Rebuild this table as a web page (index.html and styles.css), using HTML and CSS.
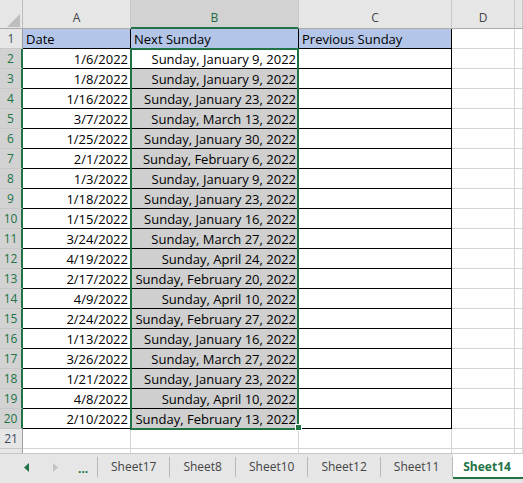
FILE: index.html
```html
<!DOCTYPE html>
<html>
<head>
<meta charset="utf-8">
<link rel="stylesheet" href="styles.css">
</head>
<body>
<div class="sheet">
  <div class="corner"><svg width="22" height="28" viewBox="0 0 22 28"><polygon points="20,14 20,27 7,27" fill="#bdbdbd"/></svg></div>
  <div class="ch">A</div><div class="ch on">B</div><div class="ch">C</div><div class="ch">D</div><div class="ch"></div>

  <div class="rh">1</div><div class="c d hdr">Date</div><div class="c d hdr">Next Sunday</div><div class="c d hdr">Previous Sunday</div><div class="c"></div><div class="c"></div>
  <div class="rh on">2</div><div class="c d num">1/6/2022</div><div class="c d num">Sunday, January 9, 2022</div><div class="c d"></div><div class="c"></div><div class="c"></div>
  <div class="rh on">3</div><div class="c d num">1/8/2022</div><div class="c d num fill">Sunday, January 9, 2022</div><div class="c d"></div><div class="c"></div><div class="c"></div>
  <div class="rh on">4</div><div class="c d num">1/16/2022</div><div class="c d num fill">Sunday, January 23, 2022</div><div class="c d"></div><div class="c"></div><div class="c"></div>
  <div class="rh on">5</div><div class="c d num">3/7/2022</div><div class="c d num fill">Sunday, March 13, 2022</div><div class="c d"></div><div class="c"></div><div class="c"></div>
  <div class="rh on">6</div><div class="c d num">1/25/2022</div><div class="c d num fill">Sunday, January 30, 2022</div><div class="c d"></div><div class="c"></div><div class="c"></div>
  <div class="rh on">7</div><div class="c d num">2/1/2022</div><div class="c d num fill">Sunday, February 6, 2022</div><div class="c d"></div><div class="c"></div><div class="c"></div>
  <div class="rh on">8</div><div class="c d num">1/3/2022</div><div class="c d num fill">Sunday, January 9, 2022</div><div class="c d"></div><div class="c"></div><div class="c"></div>
  <div class="rh on">9</div><div class="c d num">1/18/2022</div><div class="c d num fill">Sunday, January 23, 2022</div><div class="c d"></div><div class="c"></div><div class="c"></div>
  <div class="rh on">10</div><div class="c d num">1/15/2022</div><div class="c d num fill">Sunday, January 16, 2022</div><div class="c d"></div><div class="c"></div><div class="c"></div>
  <div class="rh on">11</div><div class="c d num">3/24/2022</div><div class="c d num fill">Sunday, March 27, 2022</div><div class="c d"></div><div class="c"></div><div class="c"></div>
  <div class="rh on">12</div><div class="c d num">4/19/2022</div><div class="c d num fill">Sunday, April 24, 2022</div><div class="c d"></div><div class="c"></div><div class="c"></div>
  <div class="rh on">13</div><div class="c d num">2/17/2022</div><div class="c d num fill">Sunday, February 20, 2022</div><div class="c d"></div><div class="c"></div><div class="c"></div>
  <div class="rh on">14</div><div class="c d num">4/9/2022</div><div class="c d num fill">Sunday, April 10, 2022</div><div class="c d"></div><div class="c"></div><div class="c"></div>
  <div class="rh on">15</div><div class="c d num">2/24/2022</div><div class="c d num fill">Sunday, February 27, 2022</div><div class="c d"></div><div class="c"></div><div class="c"></div>
  <div class="rh on">16</div><div class="c d num">1/13/2022</div><div class="c d num fill">Sunday, January 16, 2022</div><div class="c d"></div><div class="c"></div><div class="c"></div>
  <div class="rh on">17</div><div class="c d num">3/26/2022</div><div class="c d num fill">Sunday, March 27, 2022</div><div class="c d"></div><div class="c"></div><div class="c"></div>
  <div class="rh on">18</div><div class="c d num">1/21/2022</div><div class="c d num fill">Sunday, January 23, 2022</div><div class="c d"></div><div class="c"></div><div class="c"></div>
  <div class="rh on">19</div><div class="c d num">4/8/2022</div><div class="c d num fill">Sunday, April 10, 2022</div><div class="c d"></div><div class="c"></div><div class="c"></div>
  <div class="rh on">20</div><div class="c d num">2/10/2022</div><div class="c d num fill">Sunday, February 13, 2022</div><div class="c d"></div><div class="c"></div><div class="c"></div>
  <div class="rh">21</div><div class="c"></div><div class="c"></div><div class="c"></div><div class="c"></div><div class="c"></div>
  <div class="stub rhs"></div><div class="stub"></div><div class="stub"></div><div class="stub"></div><div class="stub"></div><div class="stub"></div>

  <div class="selection"></div>
  <div class="handle"></div>
</div>
<div class="tabs">
  <div class="nav">
    <svg class="arr" width="5" height="9" viewBox="0 0 5 9"><polygon points="5,0 5,9 0,4.5" fill="#217346"/></svg>
    <svg class="arr arr2" width="5" height="9" viewBox="0 0 5 9"><polygon points="0,0 0,9 5,4.5" fill="#c4c4c4"/></svg>
    <span class="dots">...</span>
  </div>
  <span class="sep"></span><div class="tab">Sheet17</div>
  <span class="sep"></span><div class="tab">Sheet8</div>
  <span class="sep"></span><div class="tab">Sheet10</div>
  <span class="sep"></span><div class="tab">Sheet12</div>
  <span class="sep"></span><div class="tab">Sheet11</div>
  <span class="sep"></span><div class="tab active">Sheet14</div>
</div>
</body>
</html>
```
FILE: styles.css
```css
html, body {
  margin: 0;
  padding: 0;
  background: #ffffff;
}
body {
  width: 523px;
  height: 483px;
  overflow: hidden;
  font-family: "Open Sans", "Noto Sans", sans-serif;
}
.sheet {
  position: relative;
  display: grid;
  grid-template-columns: 23px 108px 168px 153px 63px 1fr;
  grid-template-rows: 29px repeat(21, 20px) 4px;
}
.sheet > div {
  box-sizing: border-box;
}
.corner {
  background: #e6e6e6;
  border-right: 1px solid #bdbdbd;
  border-bottom: 1px solid #ababab;
}
.corner svg {
  display: block;
}
.ch {
  background: #e6e6e6;
  border-right: 1px solid #c8c8c8;
  border-bottom: 1px solid #ababab;
  color: #444444;
  font-size: 12px;
  line-height: 14px;
  padding-top: 11px;
  text-align: center;
}
.ch.on {
  background: #d2d2d2;
  color: #1e6b40;
  border-bottom: 2px solid #217346;
}
.rh {
  background: #e6e6e6;
  border-right: 1px solid #9e9e9e;
  border-bottom: 1px solid #c8c8c8;
  color: #3c4a5e;
  font-size: 12px;
  line-height: 19px;
  text-align: center;
}
.rh.on {
  background: #d2d2d2;
  color: #217346;
  border-right: 2px solid #217346;
}
.c {
  border-right: 1px solid #d4d4d4;
  border-bottom: 1px solid #d4d4d4;
  color: #000000;
  font-size: 13px;
  line-height: 19px;
  padding: 1px 2px 0 3px;
  white-space: nowrap;
  overflow: hidden;
}
.c.d {
  border-right-color: #000000;
  border-bottom-color: #000000;
}
.hdr {
  background: #b4c6e7;
}
.num {
  text-align: right;
}
.fill {
  background: #cfcfcf;
}
.stub {
  border-right: 1px solid #d4d4d4;
}
.stub.rhs {
  background: #e6e6e6;
  border-right-color: #9e9e9e;
}
.selection {
  position: absolute;
  left: 130px;
  top: 48px;
  width: 169px;
  height: 382px;
  border: 2px solid #217346;
  box-sizing: border-box;
  pointer-events: none;
}
.handle {
  position: absolute;
  left: 295px;
  top: 424px;
  width: 7px;
  height: 7px;
  background: #217346;
  border: 1px solid #ffffff;
  box-sizing: border-box;
}
.tabs {
  display: flex;
  align-items: flex-start;
  height: 29px;
  background: #e6e6e6;
  border-top: 1px solid #c8c8c8;
  font-size: 12px;
  color: #444444;
}
.nav {
  width: 97px;
  height: 26px;
  display: flex;
  align-items: center;
  padding-left: 24px;
  box-sizing: border-box;
}
.arr {
  display: block;
}
.arr2 {
  margin-left: 24px;
}
.dots {
  margin-left: 20px;
  color: #217346;
  font-weight: 700;
  font-size: 12px;
  line-height: 14px;
  padding-top: 4px;
}
.sep {
  width: 1px;
  height: 20px;
  margin-top: 3px;
  background: #b9b9b9;
}
.tab {
  height: 24px;
  line-height: 22px;
  padding: 2px 13px 0;
  box-sizing: border-box;
  white-space: nowrap;
}
.tab.active {
  flex: 1;
  height: 25px;
  background: #ffffff;
  color: #217346;
  font-weight: 700;
  border-bottom: 2px solid #217346;
  padding: 2px 0 0 10px;
}
```
